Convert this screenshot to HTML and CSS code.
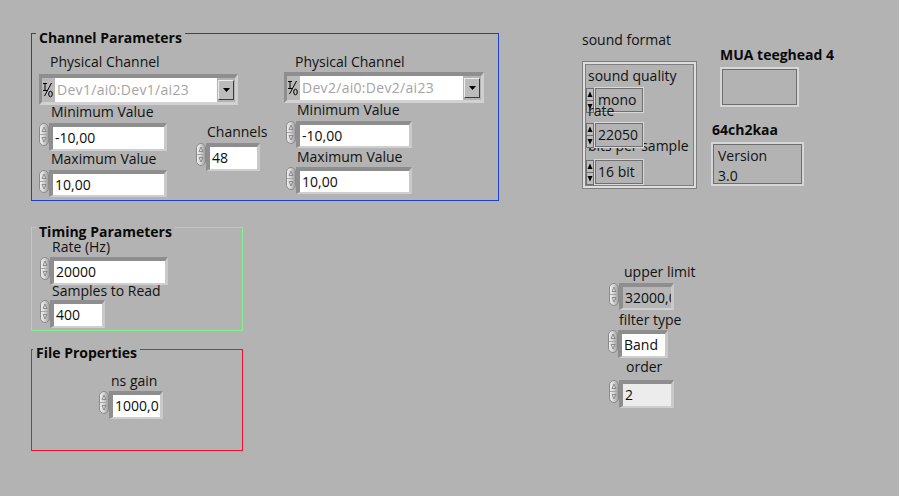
FILE: index.html
```html
<!DOCTYPE html>
<html>
<head>
<meta charset="utf-8">
<link rel="stylesheet" href="styles.css">
</head>
<body>
<svg class="defs" width="0" height="0" aria-hidden="true">
  <defs>
    <linearGradient id="spg" x1="0" x2="1" y1="0" y2="0">
      <stop offset="0" stop-color="#f2f2f2"/>
      <stop offset="0.45" stop-color="#d6d6d6"/>
      <stop offset="1" stop-color="#9a9a9a"/>
    </linearGradient>
    <symbol id="spin" viewBox="0 0 10 23">
      <rect x="0.5" y="0.5" width="9" height="22" rx="4.5" fill="url(#spg)" stroke="#8a8a8a"/>
      <line x1="1" y1="11.5" x2="9" y2="11.5" stroke="#a6a6a6"/>
      <path d="M3 8.5 L5 4 L7 8.5 Z" fill="none" stroke="#7c7c7c" stroke-width="0.8"/>
      <path d="M3 14.5 L5 19 L7 14.5 Z" fill="none" stroke="#7c7c7c" stroke-width="0.8"/>
    </symbol>
    <symbol id="updn" viewBox="0 0 8 25">
      <rect x="0.5" y="0.5" width="7" height="24" fill="#bdbdbd" stroke="#6e6e6e"/>
      <line x1="0.5" y1="12.5" x2="7.5" y2="12.5" stroke="#6e6e6e"/>
      <path d="M1.5 9 L4 3.5 L6.5 9 Z" fill="#000"/>
      <path d="M1.5 16 L4 21.5 L6.5 16 Z" fill="#000"/>
    </symbol>
    <symbol id="io" viewBox="0 0 12 20">
      <path d="M1 3.5h4M3 3.5v7M1 10.5h4" stroke="#000" stroke-width="1" fill="none"/>
      <path d="M9.5 3 L2.5 16" stroke="#000" stroke-width="1" fill="none"/>
      <ellipse cx="8.5" cy="14" rx="1.8" ry="2.8" stroke="#000" stroke-width="1" fill="none"/>
    </symbol>
  </defs>
</svg>

<div class="panel">
  <div class="group grp-ch"></div>
  <div class="group grp-tm"></div>
  <div class="group grp-fp"></div>
  <div class="g-title t-ch">Channel Parameters</div>
  <div class="g-title t-tm">Timing Parameters</div>
  <div class="g-title t-fp">File Properties</div>

  <div class="lbl l-pc1">Physical Channel</div>
  <div class="dd dd1">
    <div class="dd-icon"><svg width="12" height="20"><use href="#io"/></svg></div>
    <div class="dd-text">Dev1/ai0:Dev1/ai23</div>
    <div class="dd-btnwrap"><div class="dd-btn"><svg width="7" height="4" viewBox="0 0 7 4"><path d="M0 0h7L3.5 4z" fill="#000"/></svg></div></div>
  </div>
  <div class="lbl l-min1">Minimum Value</div>
  <div class="num n-min1"><svg class="spin"><use href="#spin"/></svg><div class="field">-10,00</div></div>
  <div class="lbl l-max1">Maximum Value</div>
  <div class="num n-max1"><svg class="spin"><use href="#spin"/></svg><div class="field">10,00</div></div>
  <div class="lbl l-chn">Channels</div>
  <div class="num n-chn"><svg class="spin"><use href="#spin"/></svg><div class="field">48</div></div>

  <div class="lbl l-pc2">Physical Channel</div>
  <div class="dd dd2">
    <div class="dd-icon"><svg width="12" height="20"><use href="#io"/></svg></div>
    <div class="dd-text">Dev2/ai0:Dev2/ai23</div>
    <div class="dd-btnwrap"><div class="dd-btn"><svg width="7" height="4" viewBox="0 0 7 4"><path d="M0 0h7L3.5 4z" fill="#000"/></svg></div></div>
  </div>
  <div class="lbl l-min2">Minimum Value</div>
  <div class="num n-min2"><svg class="spin"><use href="#spin"/></svg><div class="field">-10,00</div></div>
  <div class="lbl l-max2">Maximum Value</div>
  <div class="num n-max2"><svg class="spin"><use href="#spin"/></svg><div class="field">10,00</div></div>

  <div class="lbl l-rate">Rate (Hz)</div>
  <div class="num n-rate"><svg class="spin"><use href="#spin"/></svg><div class="field">20000</div></div>
  <div class="lbl l-samp">Samples to Read</div>
  <div class="num n-samp"><svg class="spin"><use href="#spin"/></svg><div class="field">400</div></div>

  <div class="lbl l-ns">ns gain</div>
  <div class="num n-ns"><svg class="spin"><use href="#spin"/></svg><div class="field">1000,0</div></div>

  <div class="lbl l-sf">sound format</div>
  <div class="cluster"></div>
  <div class="lbl l-sq">sound quality</div>
  <div class="ring r1"><svg class="updn"><use href="#updn"/></svg><div class="rbox">mono</div></div>
  <div class="lbl l-rt">rate</div>
  <div class="lbl l-bps">bits per sample</div>
  <div class="ring r2"><svg class="updn"><use href="#updn"/></svg><div class="rbox">22050</div></div>
  <div class="ring r3"><svg class="updn"><use href="#updn"/></svg><div class="rbox">16 bit</div></div>

  <div class="lbl b l-mua">MUA teeghead 4</div>
  <div class="ind ind-mua"></div>
  <div class="lbl b l-64">64ch2kaa</div>
  <div class="ind ind-ver"><div>Version</div><div>3.0</div></div>

  <div class="lbl l-ul">upper limit</div>
  <div class="num n-ul"><svg class="spin"><use href="#spin"/></svg><div class="field gray">32000,0</div></div>
  <div class="lbl l-ft">filter type</div>
  <div class="num n-ft"><svg class="spin"><use href="#spin"/></svg><div class="field">Band</div></div>
  <div class="lbl l-ord">order</div>
  <div class="num n-ord"><svg class="spin"><use href="#spin"/></svg><div class="field light">2</div></div>
</div>
</body>
</html>
```

FILE: styles.css
```css
* { box-sizing: border-box; }
html, body { margin: 0; padding: 0; }
body {
  background: #b3b3b3;
  width: 899px;
  height: 496px;
  overflow: hidden;
  font-family: "Open Sans", "Noto Sans", "DejaVu Sans", sans-serif;
  font-size: 14px;
  line-height: 16px;
  color: #121212;
}
.defs { position: absolute; width: 0; height: 0; overflow: hidden; }
.panel { position: relative; width: 899px; height: 496px; }

.group { position: absolute; border: 1px solid; }
.grp-ch { left: 31px; top: 33px; width: 468px; height: 168px; border-color: #1c3fd6; }
.grp-tm { left: 31px; top: 227px; width: 212px; height: 104px; border-color: #86f08f; }
.grp-fp { left: 31px; top: 349px; width: 212px; height: 102px; border-color: #f2102e; }
.g-title {
  position: absolute;
  background: #b3b3b3;
  font-weight: 700;
  padding: 0 3px;
  white-space: nowrap;
  color: #0a0a0a;
}
.t-ch { left: 36px; top: 30px; }
.t-tm { left: 36px; top: 224px; }
.t-fp { left: 33px; top: 345px; }

.lbl { position: absolute; white-space: nowrap; }
.b { font-weight: 700; color: #0a0a0a; }
.l-pc1 { left: 50px; top: 54px; }
.l-min1 { left: 51px; top: 104px; }
.l-max1 { left: 51px; top: 151px; }
.l-chn { left: 207px; top: 124px; }
.l-pc2 { left: 295px; top: 54px; }
.l-min2 { left: 297px; top: 102px; }
.l-max2 { left: 297px; top: 149px; }
.l-rate { left: 52px; top: 239px; }
.l-samp { left: 52px; top: 283px; }
.l-ns { left: 111px; top: 373px; }
.l-sf { left: 582px; top: 32px; }
.l-sq { left: 588px; top: 68px; }
.l-rt { left: 588px; top: 103px; z-index: 2; }
.l-bps { left: 588px; top: 138px; }
.l-mua { left: 720px; top: 47px; }
.l-64 { left: 712px; top: 122px; }
.l-ul { left: 624px; top: 264px; }
.l-ft { left: 619px; top: 312px; }
.l-ord { left: 626px; top: 359px; }

.num { position: absolute; display: flex; align-items: flex-start; }
.spin { width: 10px; height: 23px; flex: none; }
.field {
  height: 28px;
  border-style: solid;
  border-width: 4px 3px 2px 4px;
  border-color: #8e8e8e #c9c9c9 #cfcfcf #8e8e8e;
  background: #fff;
  padding-left: 2px;
  display: flex;
  align-items: center;
  overflow: hidden;
  white-space: nowrap;
  color: #0c0c0c;
}
.field.gray { background: #b6b6b6; }
.field.light { background: #ececec; }
.n-min1 { left: 39px; top: 123px; }
.n-min1 .field { width: 118px; }
.n-max1 { left: 39px; top: 170px; }
.n-max1 .field { width: 118px; height: 27px; }
.n-chn { left: 196px; top: 143px; }
.n-chn .field { width: 54px; }
.n-min2 { left: 286px; top: 121px; }
.n-min2 .field { width: 116px; height: 27px; }
.n-max2 { left: 286px; top: 167px; }
.n-max2 .field { width: 116px; height: 27px; }
.n-rate { left: 40px; top: 257px; }
.n-rate .field { width: 118px; }
.n-samp { left: 40px; top: 300px; }
.n-samp .field { width: 55px; }
.n-ns { left: 99px; top: 391px; }
.n-ns .field { width: 54px; }
.n-ul { left: 609px; top: 283px; }
.n-ul .field { width: 55px; height: 27px; }
.n-ft { left: 608px; top: 330px; }
.n-ft .field { width: 50px; }
.n-ord { left: 609px; top: 380px; }
.n-ord .field { width: 55px; }

.dd {
  position: absolute;
  display: flex;
  height: 31px;
  border-style: solid;
  border-width: 4px 3px 3px 3px;
  border-color: #8e8e8e #cfcfcf #d2d2d2 #8e8e8e;
  background: #b3b3b3;
}
.dd1 { left: 39px; top: 74px; width: 199px; }
.dd2 { left: 284px; top: 72px; width: 200px; }
.dd-icon {
  width: 13px;
  flex: none;
  display: flex;
  align-items: center;
  justify-content: flex-start;
  background: #b9b9b9;
}
.dd-text {
  flex: 1;
  background: #fff;
  color: #a4a4a4;
  padding-left: 2px;
  letter-spacing: 0.3px;
  display: flex;
  align-items: center;
  white-space: nowrap;
  overflow: hidden;
}
.dd-btnwrap { width: 18px; flex: none; padding: 2px 1px 0 1px; }
.dd-btn {
  width: 16px;
  height: 20px;
  background: #bcbcbc;
  border: 1px solid;
  border-color: #ececec #3c3c3c #3c3c3c #ececec;
  display: flex;
  align-items: center;
  justify-content: center;
}

.cluster {
  position: absolute;
  left: 582px;
  top: 61px;
  width: 115px;
  height: 128px;
  border: 1px solid #7f7f7f;
  box-shadow: inset 0 0 0 2px #dedede, inset 0 0 0 3px #7f7f7f;
}
.ring { position: absolute; display: flex; align-items: flex-start; z-index: 1; }
.updn { width: 8px; height: 25px; flex: none; margin-top: 1px; }
.rbox {
  width: 50px;
  height: 26px;
  border: 1px solid #d9d9d9;
  box-shadow: inset 0 0 0 1px #707070;
  background: #b3b3b3;
  padding-left: 3px;
  display: flex;
  align-items: center;
  white-space: nowrap;
}
.r1 { left: 586px; top: 87px; }
.r2 { left: 586px; top: 122px; }
.r3 { left: 586px; top: 159px; }

.ind {
  position: absolute;
  border: 2px solid #d6d6d6;
  box-shadow: inset 0 0 0 1px #6e6e6e;
  background: #b3b3b3;
}
.ind-mua { left: 720px; top: 67px; width: 79px; height: 40px; }
.ind-ver {
  left: 711px;
  top: 142px;
  width: 93px;
  height: 44px;
  padding: 2px 0 0 5px;
  line-height: 20px;
}
```
